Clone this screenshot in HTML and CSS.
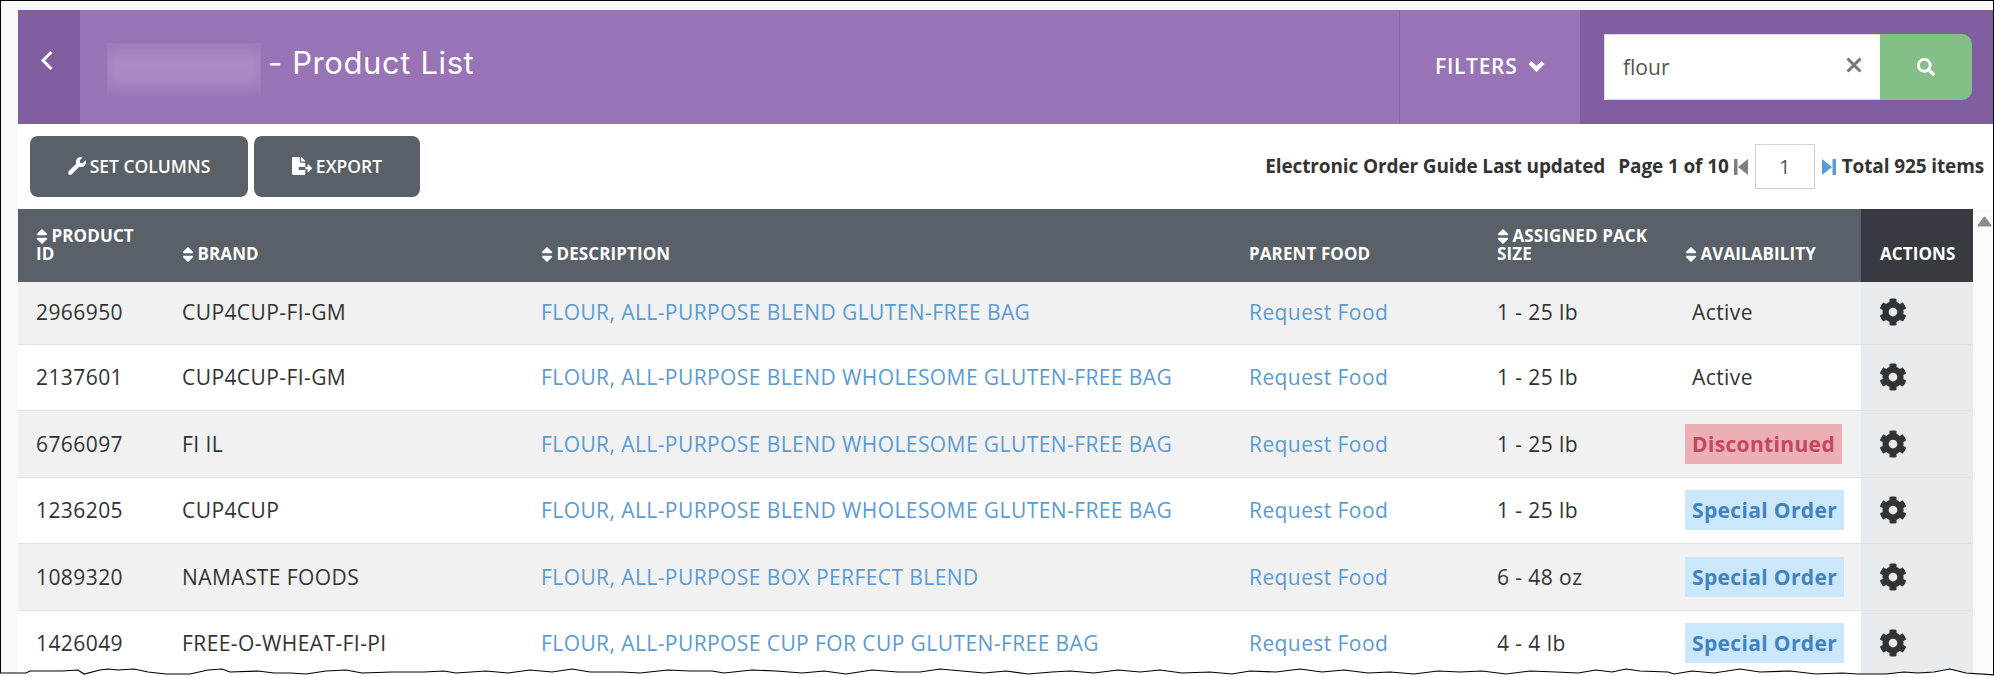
FILE: index.html
```html
<!DOCTYPE html>
<html lang="en">
<head>
  <meta charset="UTF-8" />
  <title>Product List</title>
  <link rel="stylesheet" href="styles.css">
</head>
<body>
  <div class="frame">
    <div class="main">

      <!-- HEADER -->
      <div class="header">
        <a class="back" href="#">
          <svg width="14" height="21" viewBox="0 0 14 21"><polyline points="11.5,2 3,10.5 11.5,19" fill="none" stroke="#fff" stroke-width="3"/></svg>
        </a>
        <div class="title">
          <span class="blurred"></span>
          <span class="title-text">- Product List</span>
        </div>
        <a class="filters" href="#">
          FILTERS
          <svg class="filters-arrow" width="17" height="12" viewBox="0 0 17 12"><polyline points="2,2.5 8.5,9 15,2.5" fill="none" stroke="#fff" stroke-width="4.4"/></svg>
        </a>
        <div class="search">
          <div class="search-box">
            <input class="search-input" type="text" value="flour">
            <svg class="clear" width="16" height="16" viewBox="0 0 16 16"><path d="M1.5 1.5l13 13M14.5 1.5l-13 13" stroke="#777" stroke-width="3" fill="none"/></svg>
          </div>
          <button class="search-btn">
            <svg width="18" height="18" viewBox="0 0 512 512"><path fill="#fff" d="M505 442.7L405.3 343c-4.5-4.5-10.6-7-17-7H372c27.6-35.3 44-79.7 44-128C416 93.1 322.9 0 208 0S0 93.1 0 208s93.1 208 208 208c48.3 0 92.7-16.4 128-44v16.3c0 6.4 2.5 12.5 7 17l99.7 99.7c9.4 9.4 24.6 9.4 33.9 0l28.3-28.3c9.4-9.4 9.4-24.6.1-34zM208 336c-70.7 0-128-57.2-128-128 0-70.7 57.2-128 128-128 70.7 0 128 57.2 128 128 0 70.7-57.2 128-128 128z"/></svg>
          </button>
        </div>
      </div>

      <!-- TOOLBAR -->
      <div class="toolbar">
        <div class="tools">
          <button class="tool tool-columns">
            <svg width="18" height="18" viewBox="0 0 512 512"><path fill="#fff" d="M507.73 109.1c-2.24-9.03-13.54-12.09-20.12-5.51l-74.36 74.36-67.88-11.31-11.31-67.88 74.36-74.36c6.62-6.62 3.43-17.9-5.66-20.16-47.38-11.74-99.55.91-136.58 37.93-39.64 39.64-50.55 97.1-34.05 147.2L18.74 402.76c-24.99 24.99-24.99 65.51 0 90.5 24.99 24.99 65.51 24.99 90.5 0l213.21-213.21c50.12 16.71 107.47 5.68 147.37-34.22 37.07-37.07 49.7-89.32 37.91-136.73z"/></svg>
            SET COLUMNS
          </button>
          <button class="tool tool-export">
            <svg width="20" height="18" viewBox="0 0 576 512"><path fill="#fff" d="M384 121.9c0-6.3-2.5-12.4-7-16.9L279.1 7c-4.5-4.5-10.6-7-17-7H256v128h128zM571 308l-95.7-96.4c-10.1-10.1-27.4-3-27.4 11.3V288h-64v64h64v65.2c0 14.3 17.3 21.4 27.4 11.3L571 332c6.6-6.6 6.6-17.4 0-24zm-379 28v-32c0-8.8 7.2-16 16-16h176V160H248c-13.2 0-24-10.8-24-24V0H24C10.7 0 0 10.7 0 24v464c0 13.3 10.7 24 24 24h336c13.3 0 24-10.7 24-24V368H208c-8.8 0-16-7.2-16-16z"/></svg>
            EXPORT
          </button>
        </div>
        <div class="pager">
          <span class="updated">Electronic Order Guide Last updated</span>
          <span>Page 1 of 10</span>
          <svg class="pager-prev" width="14" height="16" viewBox="0 0 14 16"><path fill="#7f7f7f" d="M0 0h3.5v16H0zM14 0v16L4 8z"/></svg>
          <input class="page-input" type="text" value="1">
          <svg class="pager-next" width="14" height="16" viewBox="0 0 14 16"><path fill="#5b9bd1" d="M14 0h-3.5v16H14zM0 0v16L10 8z"/></svg>
          <span>Total 925 items</span>
        </div>
      </div>

      <!-- TABLE -->
      <div class="table-wrap">
        <table class="products">
          <colgroup>
            <col class="c-id"><col class="c-brand"><col class="c-desc"><col class="c-parent"><col class="c-pack"><col class="c-avail"><col class="c-actions">
          </colgroup>
          <thead>
            <tr>
              <th><svg class="sort" viewBox="0 50 320 412"><use href="#sort-arrows"/></svg> PRODUCT ID</th>
              <th><svg class="sort" viewBox="0 50 320 412"><use href="#sort-arrows"/></svg> BRAND</th>
              <th><svg class="sort" viewBox="0 50 320 412"><use href="#sort-arrows"/></svg> DESCRIPTION</th>
              <th>PARENT FOOD</th>
              <th><svg class="sort" viewBox="0 50 320 412"><use href="#sort-arrows"/></svg> ASSIGNED PACK SIZE</th>
              <th><svg class="sort" viewBox="0 50 320 412"><use href="#sort-arrows"/></svg> AVAILABILITY</th>
              <th class="actions-head">ACTIONS</th>
            </tr>
          </thead>
          <tbody>
            <tr class="first">
              <td>2966950</td><td>CUP4CUP-FI-GM</td>
              <td><a href="#">FLOUR, ALL-PURPOSE BLEND GLUTEN-FREE BAG</a></td>
              <td><a href="#">Request Food</a></td><td>1 - 25 lb</td>
              <td><span class="status">Active</span></td>
              <td class="actions"><svg class="gear" viewBox="0 0 512 512"><use href="#cog"/></svg></td>
            </tr>
            <tr>
              <td>2137601</td><td>CUP4CUP-FI-GM</td>
              <td><a href="#">FLOUR, ALL-PURPOSE BLEND WHOLESOME GLUTEN-FREE BAG</a></td>
              <td><a href="#">Request Food</a></td><td>1 - 25 lb</td>
              <td><span class="status">Active</span></td>
              <td class="actions"><svg class="gear" viewBox="0 0 512 512"><use href="#cog"/></svg></td>
            </tr>
            <tr>
              <td>6766097</td><td>FI IL</td>
              <td><a href="#">FLOUR, ALL-PURPOSE BLEND WHOLESOME GLUTEN-FREE BAG</a></td>
              <td><a href="#">Request Food</a></td><td>1 - 25 lb</td>
              <td><span class="badge badge-red">Discontinued</span></td>
              <td class="actions"><svg class="gear" viewBox="0 0 512 512"><use href="#cog"/></svg></td>
            </tr>
            <tr>
              <td>1236205</td><td>CUP4CUP</td>
              <td><a href="#">FLOUR, ALL-PURPOSE BLEND WHOLESOME GLUTEN-FREE BAG</a></td>
              <td><a href="#">Request Food</a></td><td>1 - 25 lb</td>
              <td><span class="badge badge-blue">Special Order</span></td>
              <td class="actions"><svg class="gear" viewBox="0 0 512 512"><use href="#cog"/></svg></td>
            </tr>
            <tr>
              <td>1089320</td><td>NAMASTE FOODS</td>
              <td><a href="#">FLOUR, ALL-PURPOSE BOX PERFECT BLEND</a></td>
              <td><a href="#">Request Food</a></td><td>6 - 48 oz</td>
              <td><span class="badge badge-blue">Special Order</span></td>
              <td class="actions"><svg class="gear" viewBox="0 0 512 512"><use href="#cog"/></svg></td>
            </tr>
            <tr>
              <td>1426049</td><td>FREE-O-WHEAT-FI-PI</td>
              <td><a href="#">FLOUR, ALL-PURPOSE CUP FOR CUP GLUTEN-FREE BAG</a></td>
              <td><a href="#">Request Food</a></td><td>4 - 4 lb</td>
              <td><span class="badge badge-blue">Special Order</span></td>
              <td class="actions"><svg class="gear" viewBox="0 0 512 512"><use href="#cog"/></svg></td>
            </tr>
          </tbody>
        </table>
        <div class="scroll-track">
          <svg class="scroll-up" width="15" height="11" viewBox="0 0 15 11"><polygon points="7.5,1.5 13.5,9.5 1.5,9.5" fill="#8c8c8c" stroke="#8c8c8c" stroke-width="2" stroke-linejoin="round"/></svg>
        </div>
      </div>
    </div>
  </div>

  <!-- torn bottom edge of the screenshot -->
  <svg class="torn" width="1994" height="14" viewBox="0 -3 1994 14">
    <path fill="#fff" stroke="#000" stroke-width="1.2" d="M0 7L26 7 30 5 62 5 78 4 84 8 100 4 108 3 118 4 134 3 148 6 166 8 190 8 208 4 222 3 230 6 258 5 274 7 290 7 306 8 326 5 346 4 362 7 392 6 424 6 444 5 456 7 486 5 508 7 530 4 552 6 572 3 590 6 622 6 640 7 668 4 690 5 712 5 724 7 752 4 776 5 802 7 824 5 846 8 872 4 898 6 920 6 940 3 962 5 984 7 1006 5 1028 8 1052 6 1070 5 1094 7 1118 4 1140 6 1160 4 1182 7 1210 6 1232 8 1250 5 1276 6 1300 3 1322 6 1344 4 1368 7 1390 6 1414 8 1438 5 1460 6 1482 5 1506 8 1530 5 1556 6 1578 7 1596 4 1612 6 1626 3 1640 5 1668 6 1674 8 1692 5 1714 7 1740 3 1760 6 1790 5 1816 8 1842 7 1858 8 1886 8 1904 6 1918 7 1934 6 1950 3 1966 7 1996 9 1996 15 -2 15 -2 7z"/>
  </svg>

  <svg class="defs" width="0" height="0">
    <defs>
      <path id="sort-arrows" fill="#fff" d="M41 288h238c21.4 0 32.1 25.9 17 41L177 448c-9.4 9.4-24.6 9.4-33.9 0L24 329c-15.1-15.1-4.4-41 17-41zm255-105L177 64c-9.4-9.4-24.6-9.4-33.9 0L24 183c-15.1 15.1-4.4 41 17 41h238c21.4 0 32.1-25.9 17-41z"/>
      <path id="cog" fill="#333" d="M487.4 315.7l-42.6-24.6c4.3-23.2 4.3-47 0-70.2l42.6-24.6c4.9-2.8 7.1-8.6 5.5-14-11.1-35.6-30-67.8-54.7-94.6-3.8-4.1-10-5.1-14.8-2.3L380.8 110c-17.9-15.4-38.5-27.3-60.8-35.1V25.8c0-5.6-3.9-10.5-9.4-11.7-36.7-8.2-74.3-7.8-109.2 0-5.5 1.2-9.4 6.1-9.4 11.7V75c-22.2 7.9-42.8 19.8-60.8 35.1L88.7 85.5c-4.9-2.8-11-1.9-14.8 2.3-24.7 26.7-43.6 58.9-54.7 94.6-1.7 5.4.6 11.2 5.5 14L67.3 221c-4.3 23.2-4.3 47 0 70.2l-42.6 24.6c-4.9 2.8-7.1 8.6-5.5 14 11.1 35.6 30 67.8 54.7 94.6 3.8 4.1 10 5.1 14.8 2.3l42.6-24.6c17.9 15.4 38.5 27.3 60.8 35.1v49.2c0 5.6 3.9 10.5 9.4 11.7 36.7 8.2 74.3 7.8 109.2 0 5.5-1.2 9.4-6.1 9.4-11.7v-49.2c22.2-7.9 42.8-19.8 60.8-35.1l42.6 24.6c4.9 2.8 11 1.9 14.8-2.3 24.7-26.7 43.6-58.9 54.7-94.6 1.5-5.5-.7-11.3-5.6-14.1zM256 336c-44.1 0-80-35.9-80-80s35.9-80 80-80 80 35.9 80 80-35.9 80-80 80z"/>
    </defs>
  </svg>
</body>
</html>
```

FILE: styles.css
```css
html, body {
  margin: 0;
  height: 677px;
  overflow: hidden;
}
body {
  font-family: "Open Sans", Arial, sans-serif;
  color: #333;
  background: #f9f9f9;
  position: relative;
}
svg {
  display: block;
}
.defs {
  position: absolute;
}
.frame {
  box-sizing: border-box;
  height: 677px;
  border: 1px solid #000;
  border-bottom: none;
  padding: 9px 0 0 17px;
}
.main {
  background: #fff;
}

/* header */
.header {
  display: flex;
  height: 114px;
  background: #9873b5;
  color: #fff;
}
.back {
  flex: 0 0 62px;
  box-sizing: border-box;
  padding: 40px 0 0 22px;
  background: #815e9f;
}
.title {
  flex: 1;
  display: flex;
  align-items: center;
  padding: 33px 0 0 27px;
  height: 53px;
}
.blurred {
  width: 154px;
  height: 53px;
  background: linear-gradient(180deg, #9f7ebc 0%, #aa8dc6 40%, #a887c3 70%, #9a76b7 100%);
  box-shadow: inset 0 0 12px #9c79b9;
}
.title-text {
  margin-left: 7px;
  font-family: "Inter", sans-serif;
  font-size: 31px;
  font-weight: 400;
  letter-spacing: 0.6px;
  margin-bottom: 14px;
}
.filters {
  flex: 0 0 181px;
  box-sizing: border-box;
  display: flex;
  align-items: center;
  gap: 11px;
  padding: 0 0 2px 35px;
  border-left: 1px solid #8a66a8;
  color: #fff;
  font-size: 21px;
  font-weight: 600;
  letter-spacing: 0.7px;
  text-decoration: none;
}
.search {
  flex: 0 0 413px;
  box-sizing: border-box;
  display: flex;
  align-items: center;
  padding-left: 24px;
  background: #815e9f;
}
.search-box {
  box-sizing: border-box;
  display: flex;
  align-items: center;
  width: 276px;
  height: 66px;
  background: #fff;
  border: 1px solid #ddd;
  border-right: none;
}
.search-input {
  flex: 1;
  min-width: 0;
  border: none;
  outline: none;
  padding: 0 0 1px 18px;
  font: 21px "Open Sans", sans-serif;
  color: #555;
}
.clear {
  margin-right: 18px;
  position: relative;
  top: -2px;
}
.search-btn {
  width: 92px;
  height: 66px;
  display: flex;
  align-items: center;
  justify-content: center;
  background: #84bf88;
  border: none;
  border-radius: 0 10px 10px 0;
}

/* toolbar */
.toolbar {
  display: flex;
  justify-content: space-between;
  align-items: center;
  height: 85px;
  box-sizing: border-box;
  padding: 0 9px 0 12px;
  font-size: 19px;
  font-weight: 700;
  letter-spacing: -0.12px;
}
.tools {
  display: flex;
  gap: 6px;
}
.tool {
  height: 61px;
  display: flex;
  align-items: center;
  justify-content: center;
  gap: 4px;
  padding-bottom: 2px;
  background: #596067;
  color: #fff;
  border: none;
  border-radius: 8px;
  font: 600 17.5px "Open Sans", sans-serif;
}
.tool-columns {
  width: 218px;
}
.tool-export {
  width: 166px;
}
.pager {
  display: flex;
  align-items: center;
  color: #333;
}
.pager span {
  padding-bottom: 2px;
}
.updated {
  margin-right: 13px;
}
.pager-prev {
  margin-left: 5px;
}
.page-input {
  box-sizing: border-box;
  width: 60px;
  height: 45px;
  margin: 0 7px;
  border: 1px solid #ccd0d8;
  text-align: center;
  font: 20px "Open Sans", sans-serif;
  color: #555;
  outline: none;
}
.pager-next {
  margin-right: 6px;
}

/* table */
.table-wrap {
  display: flex;
}
.products {
  width: 1955px;
  table-layout: fixed;
  border-collapse: collapse;
  font-size: 21px;
  letter-spacing: 0.42px;
}
.c-id { width: 146px; }
.c-brand { width: 359px; }
.c-desc { width: 708px; }
.c-parent { width: 248px; }
.c-pack { width: 188px; }
.c-avail { width: 194px; }
.c-actions { width: 112px; }
th {
  height: 73px;
  box-sizing: border-box;
  padding: 0 10px 19px 18px;
  background: #596067;
  color: #fff;
  font-size: 17px;
  font-weight: 700;
  letter-spacing: 0.1px;
  line-height: 18px;
  text-align: left;
  vertical-align: bottom;
}
.actions-head {
  background: #373a40;
  padding-left: 19px;
  padding-right: 0;
}
.sort {
  display: inline-block;
  width: 12px;
  height: 15px;
  margin-right: -1px;
  vertical-align: -2px;
}
td {
  height: 66px;
  box-sizing: border-box;
  padding: 0 0 0 18px;
  border-bottom: 1px solid #e2e3e8;
  color: #333;
}
tbody tr:nth-child(odd) td {
  height: 67px;
}
tbody tr.first:nth-child(odd) td {
  height: 62px;
  padding-bottom: 2px;
}
tbody tr:nth-child(odd) {
  background: #f1f1f1;
}
td a {
  color: #5b9bd1;
  text-decoration: none;
}
.status {
  margin-left: 7px;
}
.badge {
  display: inline-block;
  height: 40px;
  line-height: 40px;
  padding: 0 7px;
  font-weight: 700;
  letter-spacing: 0.35px;
  vertical-align: middle;
}
.badge-red {
  background: #ecafb4;
  color: #c44760;
}
.badge-blue {
  background: #cbe7fb;
  color: #4283bf;
}
td.actions {
  background: #e8ebee;
}
.gear {
  width: 28px;
  height: 28px;
}
.scroll-track {
  flex: 1;
  position: relative;
  background: #fafafa;
}
.scroll-up {
  position: absolute;
  top: 7px;
  left: 4px;
}

/* torn edge */
.torn {
  position: absolute;
  left: 0;
  bottom: 0;
}
```
